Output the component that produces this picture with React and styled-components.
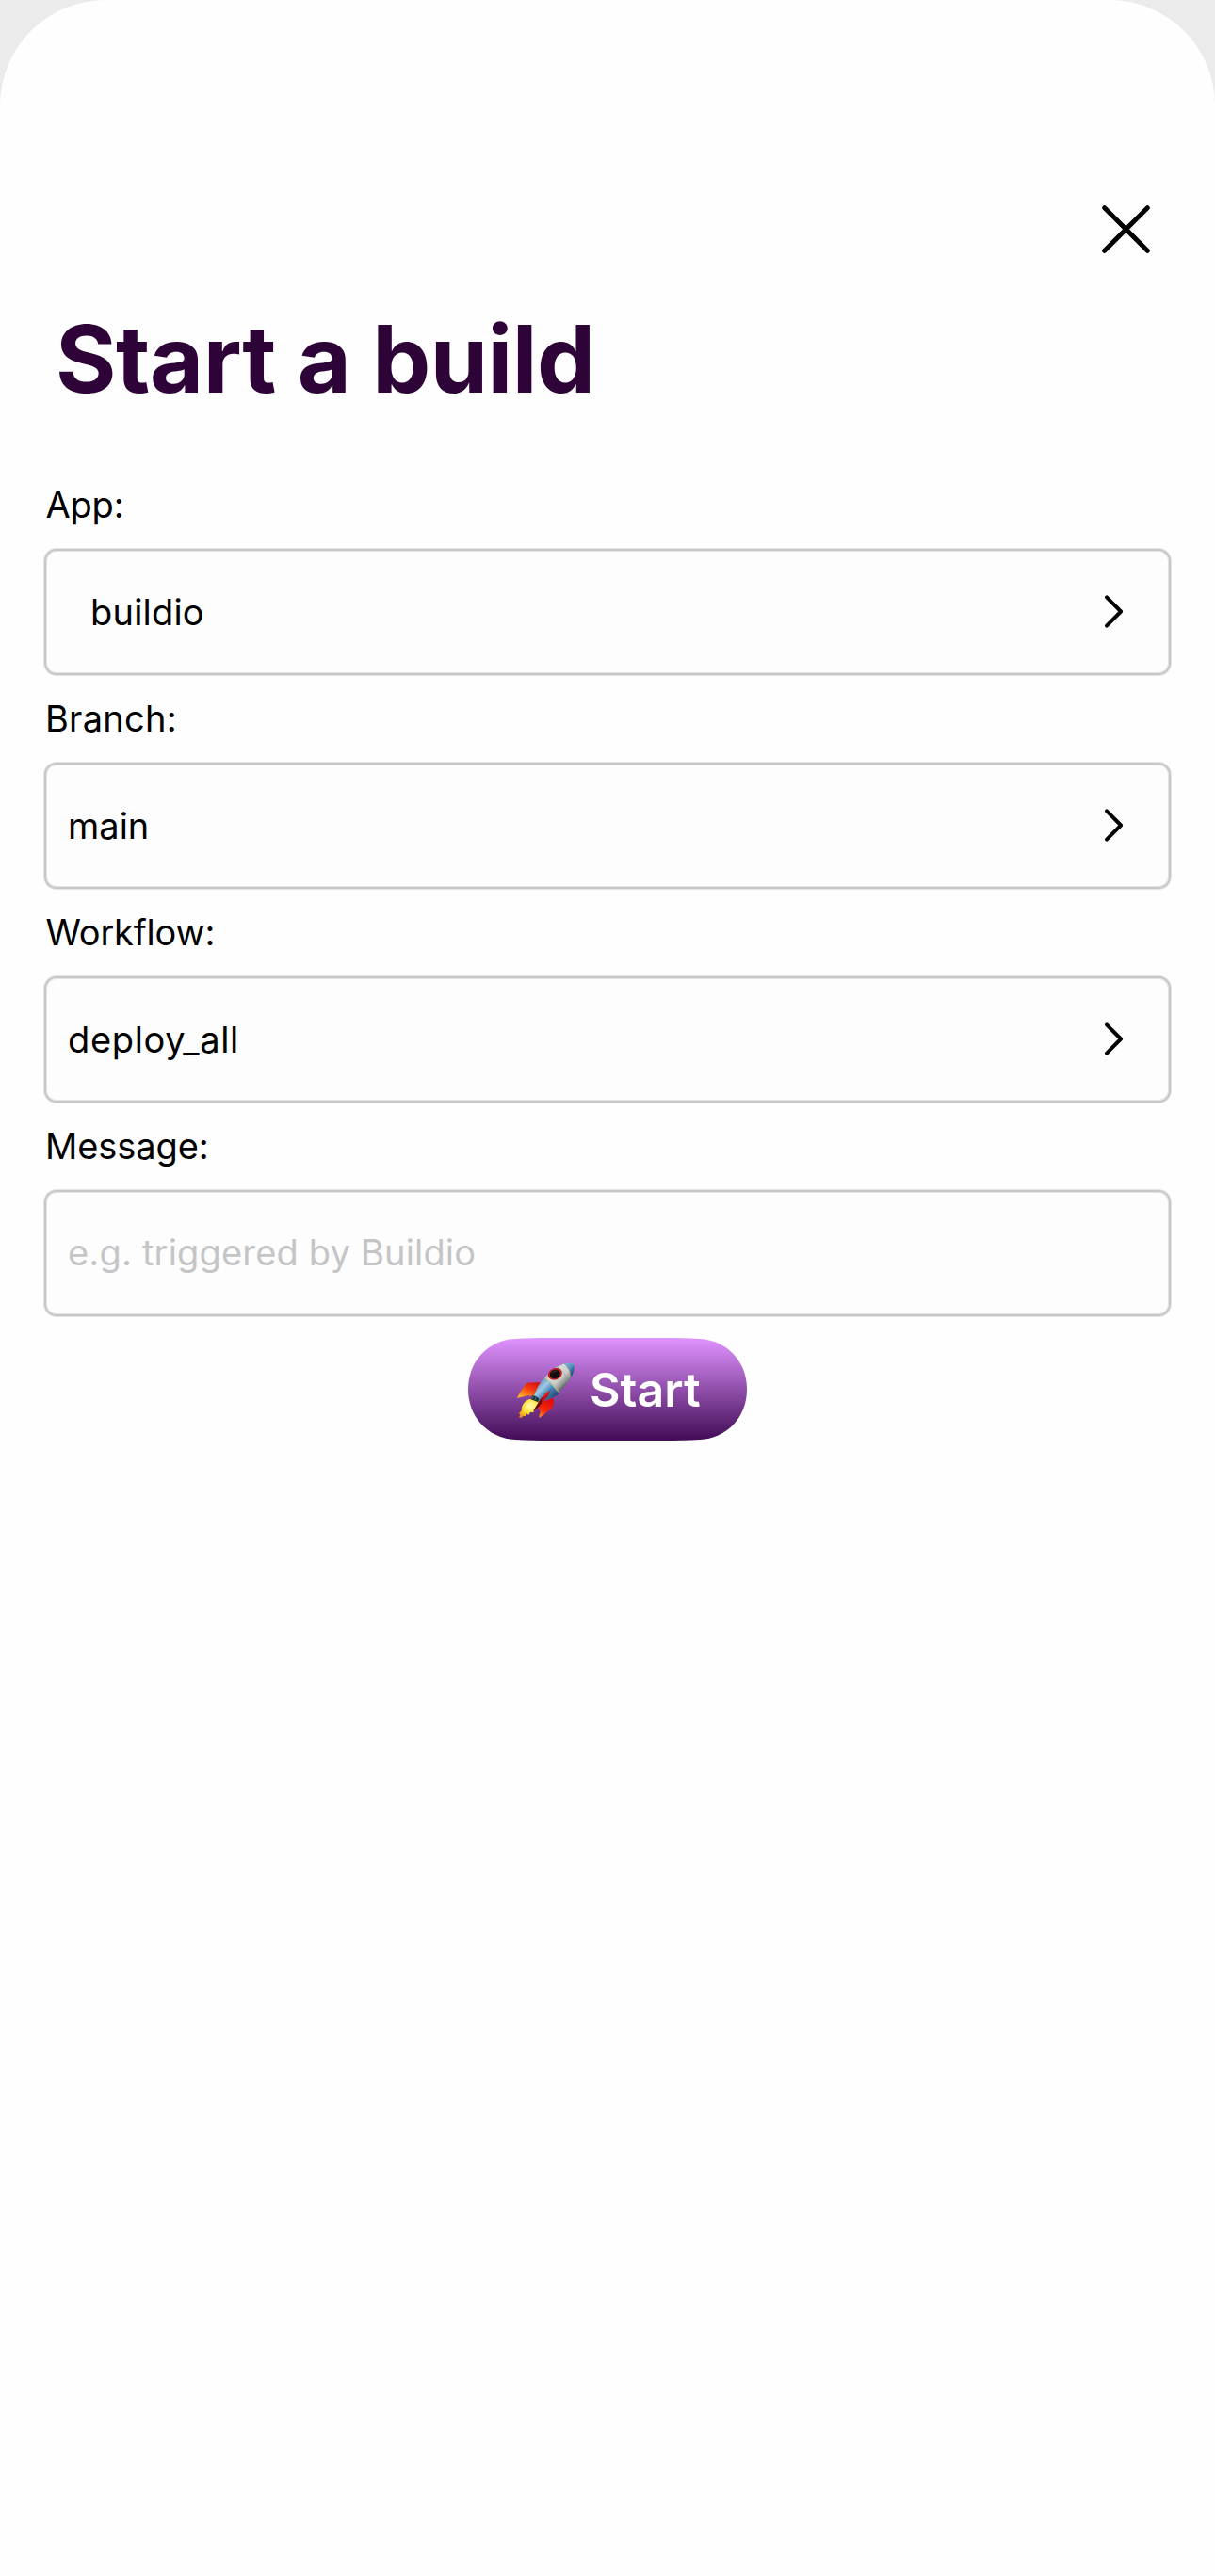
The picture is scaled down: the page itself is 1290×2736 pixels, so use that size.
import React from "react";
import styled, { createGlobalStyle } from "styled-components";

const GlobalStyle = createGlobalStyle`
  * { box-sizing: border-box; }
  body {
    margin: 0;
    background: #ebebeb;
    font-family: Inter, "Liberation Sans", sans-serif;
    color: #000;
  }
`;

const Sheet = styled.main`
  display: flex;
  flex-direction: column;
  width: 1290px;
  height: 2736px;
  padding: 218px 47px 0;
  background: #fefefe;
  border-radius: 112px 112px 0 0;
`;

const Header = styled.header`
  display: flex;
  justify-content: flex-end;
  padding-right: 22px;
  margin-bottom: 54px;
`;

const IconButton = styled.button`
  display: flex;
  padding: 0;
  border: 0;
  background: none;
`;

const Title = styled.h1`
  margin: 0 0 72px 12px;
  color: #2e0438;
  font-size: 98.5px;
  font-weight: 700;
  line-height: 118px;
  letter-spacing: -0.5px;
`;

const Form = styled.form`
  display: flex;
  flex-direction: column;
  gap: 23px;
`;

const Field = styled.div`
  display: flex;
  flex-direction: column;
  gap: 24px;
`;

const Label = styled.label`
  padding-left: ${(p) => p.$inset ?? 1}px;
  font-size: 38px;
  line-height: 46px;
  letter-spacing: ${(p) => p.$tracking}px;
  white-space: nowrap;
`;

const Box = styled.div`
  display: flex;
  align-items: center;
  justify-content: space-between;
  height: 134px;
  padding: 0 48px 0 ${(p) => (p.$indented ? 47 : 23)}px;
  border: 2px solid #c7c7c7;
  border-radius: 13px;
  background: #fdfdfd;
  box-shadow: 0 0 0 1px #e4e4e4, inset 0 0 0 1px #e4e4e4;
`;

const Value = styled.span`
  font-size: 38px;
  line-height: 46px;
  letter-spacing: ${(p) => p.$tracking}px;
  white-space: nowrap;
`;

const Input = styled.input`
  flex: 1;
  min-width: 0;
  height: 46px;
  padding: 0;
  margin-bottom: 2px;
  border: 0;
  outline: 0;
  background: transparent;
  font: 400 38px/46px Inter, "Liberation Sans", sans-serif;
  letter-spacing: 0.18px;
  &::placeholder {
    color: #c5c5c7;
    opacity: 1;
  }
`;

const StartButton = styled.button`
  display: flex;
  align-items: center;
  align-self: center;
  gap: 6px;
  width: 296px;
  height: 109px;
  padding: 0 0 0 43px;
  border: 0;
  background: linear-gradient(#e093ff, #410b56);
  clip-path: path("M0 54.5C0 25 21 2.5 50 1C62 0.4 75 0 88 0H208C221 0 234 0.4 246 1C275 2.5 296 25 296 54.5C296 84 275 106.5 246 108C234 108.6 221 109 208 109H88C75 109 62 108.6 50 108C21 106.5 0 84 0 54.5Z");
`;

const StartText = styled.span`
  color: #fff;
  font: 600 50px/60px Inter, "Liberation Sans", sans-serif;
`;

function CloseIcon() {
  return (
    <svg width="51" height="51" viewBox="0 0 51 51" fill="none" stroke="#000" strokeWidth="5" strokeLinecap="round" aria-hidden="true">
      <path d="M2.7 2.7L48.3 48.3M48.3 2.7L2.7 48.3" />
    </svg>
  );
}

function Chevron() {
  return (
    <svg width="20" height="36" viewBox="0 0 20 36" fill="none" stroke="#000" strokeWidth="3.9" strokeLinecap="round" strokeLinejoin="round" aria-hidden="true">
      <path d="M2 2.4L17.1 17.5L2 32.6" />
    </svg>
  );
}

function Rocket() {
  return (
    <svg width="80" height="80" viewBox="0 0 240 240" role="img" aria-label="rocket">
      <defs>
        <linearGradient id="hull" gradientUnits="userSpaceOnUse" x1="118" y1="62" x2="178" y2="122">
          <stop offset="0" stopColor="#8d9598" />
          <stop offset=".3" stopColor="#d9dcd8" />
          <stop offset=".58" stopColor="#c9ccc9" />
          <stop offset=".78" stopColor="#8f9490" />
          <stop offset="1" stopColor="#343c40" />
        </linearGradient>
        <linearGradient id="steel" gradientUnits="userSpaceOnUse" x1="85" y1="95" x2="145" y2="155">
          <stop offset="0" stopColor="#467aa9" />
          <stop offset=".35" stopColor="#a2c9e5" />
          <stop offset=".6" stopColor="#4585bb" />
          <stop offset="1" stopColor="#183f67" />
        </linearGradient>
        <linearGradient id="nose" gradientUnits="userSpaceOnUse" x1="180" y1="38" x2="212" y2="62">
          <stop offset="0" stopColor="#82b4d6" />
          <stop offset=".5" stopColor="#5794bf" />
          <stop offset="1" stopColor="#1b4268" />
        </linearGradient>
        <linearGradient id="finLeft" gradientUnits="userSpaceOnUse" x1="75" y1="95" x2="50" y2="147">
          <stop offset="0" stopColor="#d91510" />
          <stop offset=".4" stopColor="#f63b10" />
          <stop offset="1" stopColor="#ffad24" />
        </linearGradient>
        <linearGradient id="finRight" gradientUnits="userSpaceOnUse" x1="132" y1="155" x2="103" y2="210">
          <stop offset="0" stopColor="#e10c08" />
          <stop offset=".6" stopColor="#f52a0b" />
          <stop offset="1" stopColor="#ff9a20" />
        </linearGradient>
        <radialGradient id="flame" gradientUnits="userSpaceOnUse" cx="70" cy="172" r="43">
          <stop offset="0" stopColor="#fffbb0" />
          <stop offset=".5" stopColor="#ffe23b" />
          <stop offset="1" stopColor="#f39a10" />
        </radialGradient>
      </defs>
      <path fill="url(#finLeft)" d="M58 98L105 96Q88 116 80 140L62 139L26 147Q40 119 58 98Z" />
      <path fill="url(#finRight)" d="M106 158L143 147Q146 166 137 180L98 210Q96 202 101 190L95 178Z" />
      <path fill="url(#flame)" d="M67 150L94 154Q98 168 89 181L82 186L78 193L69 191L64 201L57 196L53 205L46 203L42 209L33 208L37 200L33 195L41 187L42 175Q49 156 67 150Z" />
      <path fill="none" stroke="#fff5a4" strokeWidth="3" d="M75 160L63 183M65 164L52 187M86 164L76 182" />
      <path fill="url(#hull)" d="M209 39Q183 31 157 45C131 60 106 87 91 120L81 141L94 158L113 153C143 146 181 113 198 82Q209 61 209 39Z" />
      <path fill="url(#steel)" d="M113 82Q132 94 151 122L162 132Q137 151 111 154L94 158L81 141Q92 105 113 82Z" />
      <path fill="url(#nose)" d="M176 36Q192 33 209 39Q211 61 199 80Q198 54 176 36Z" />
      <path fill="none" stroke="#4b7186" strokeWidth="1.5" d="M176 36Q198 54 199 80" />
      <path fill="none" stroke="#bdb270" strokeWidth="2.5" d="M115 84Q142 96 162 130" />
      <path fill="none" stroke="#8c9697" strokeWidth="1.5" d="M154 48Q182 59 188 98" />
      <ellipse cx="148" cy="70" rx="23" ry="18" transform="rotate(-22 148 70)" fill="#b50c13" />
      <ellipse cx="148" cy="70" rx="20" ry="16" transform="rotate(-22 148 70)" fill="#d9261f" />
      <ellipse cx="148" cy="70" rx="17" ry="14" transform="rotate(-22 148 70)" fill="#120e10" />
      <path fill="none" stroke="#3c3f41" strokeWidth="3" strokeLinecap="round" d="M139 66Q144 59 153 60" />
      <path fill="#1a343f" d="M76 138L85 140L97 148L94 160L72 151Z" />
      <path fill="none" stroke="#6c9297" strokeWidth="2" d="M79 140L76 149M87 143L84 153" />
      <path fill="#c80b0b" d="M134 120Q119 129 105 145L78 188Q99 176 113 154Q129 139 134 120Z" />
      <path fill="#5f0d0a" d="M105 146L78 188Q93 180 104 165Z" />
      <path fill="none" stroke="#f64a2b" strokeWidth="3" d="M130 125L112 142" />
    </svg>
  );
}

const selectors = [
  { label: "App:", labelTracking: -0.2, inset: 1.5, value: "buildio", valueTracking: 0.2, indented: true },
  { label: "Branch:", labelTracking: 0.25, value: "main", valueTracking: 0 },
  { label: "Workflow:", labelTracking: -0.2, inset: 1.5, value: "deploy_all", valueTracking: 0.65 },
];

export default function App() {
  return (
    <>
      <GlobalStyle />
      <Sheet>
        <Header>
          <IconButton type="button" aria-label="Close">
            <CloseIcon />
          </IconButton>
        </Header>
        <Title>Start a build</Title>
        <Form>
          {selectors.map((s) => (
            <Field key={s.label}>
              <Label $tracking={s.labelTracking} $inset={s.inset}>{s.label}</Label>
              <Box $indented={s.indented}>
                <Value $tracking={s.valueTracking}>{s.value}</Value>
                <Chevron />
              </Box>
            </Field>
          ))}
          <Field>
            <Label htmlFor="message" $tracking={-0.1}>Message:</Label>
            <Box>
              <Input id="message" placeholder="e.g. triggered by Buildio" />
            </Box>
          </Field>
          <StartButton type="button">
            <Rocket />
            <StartText>Start</StartText>
          </StartButton>
        </Form>
      </Sheet>
    </>
  );
}
